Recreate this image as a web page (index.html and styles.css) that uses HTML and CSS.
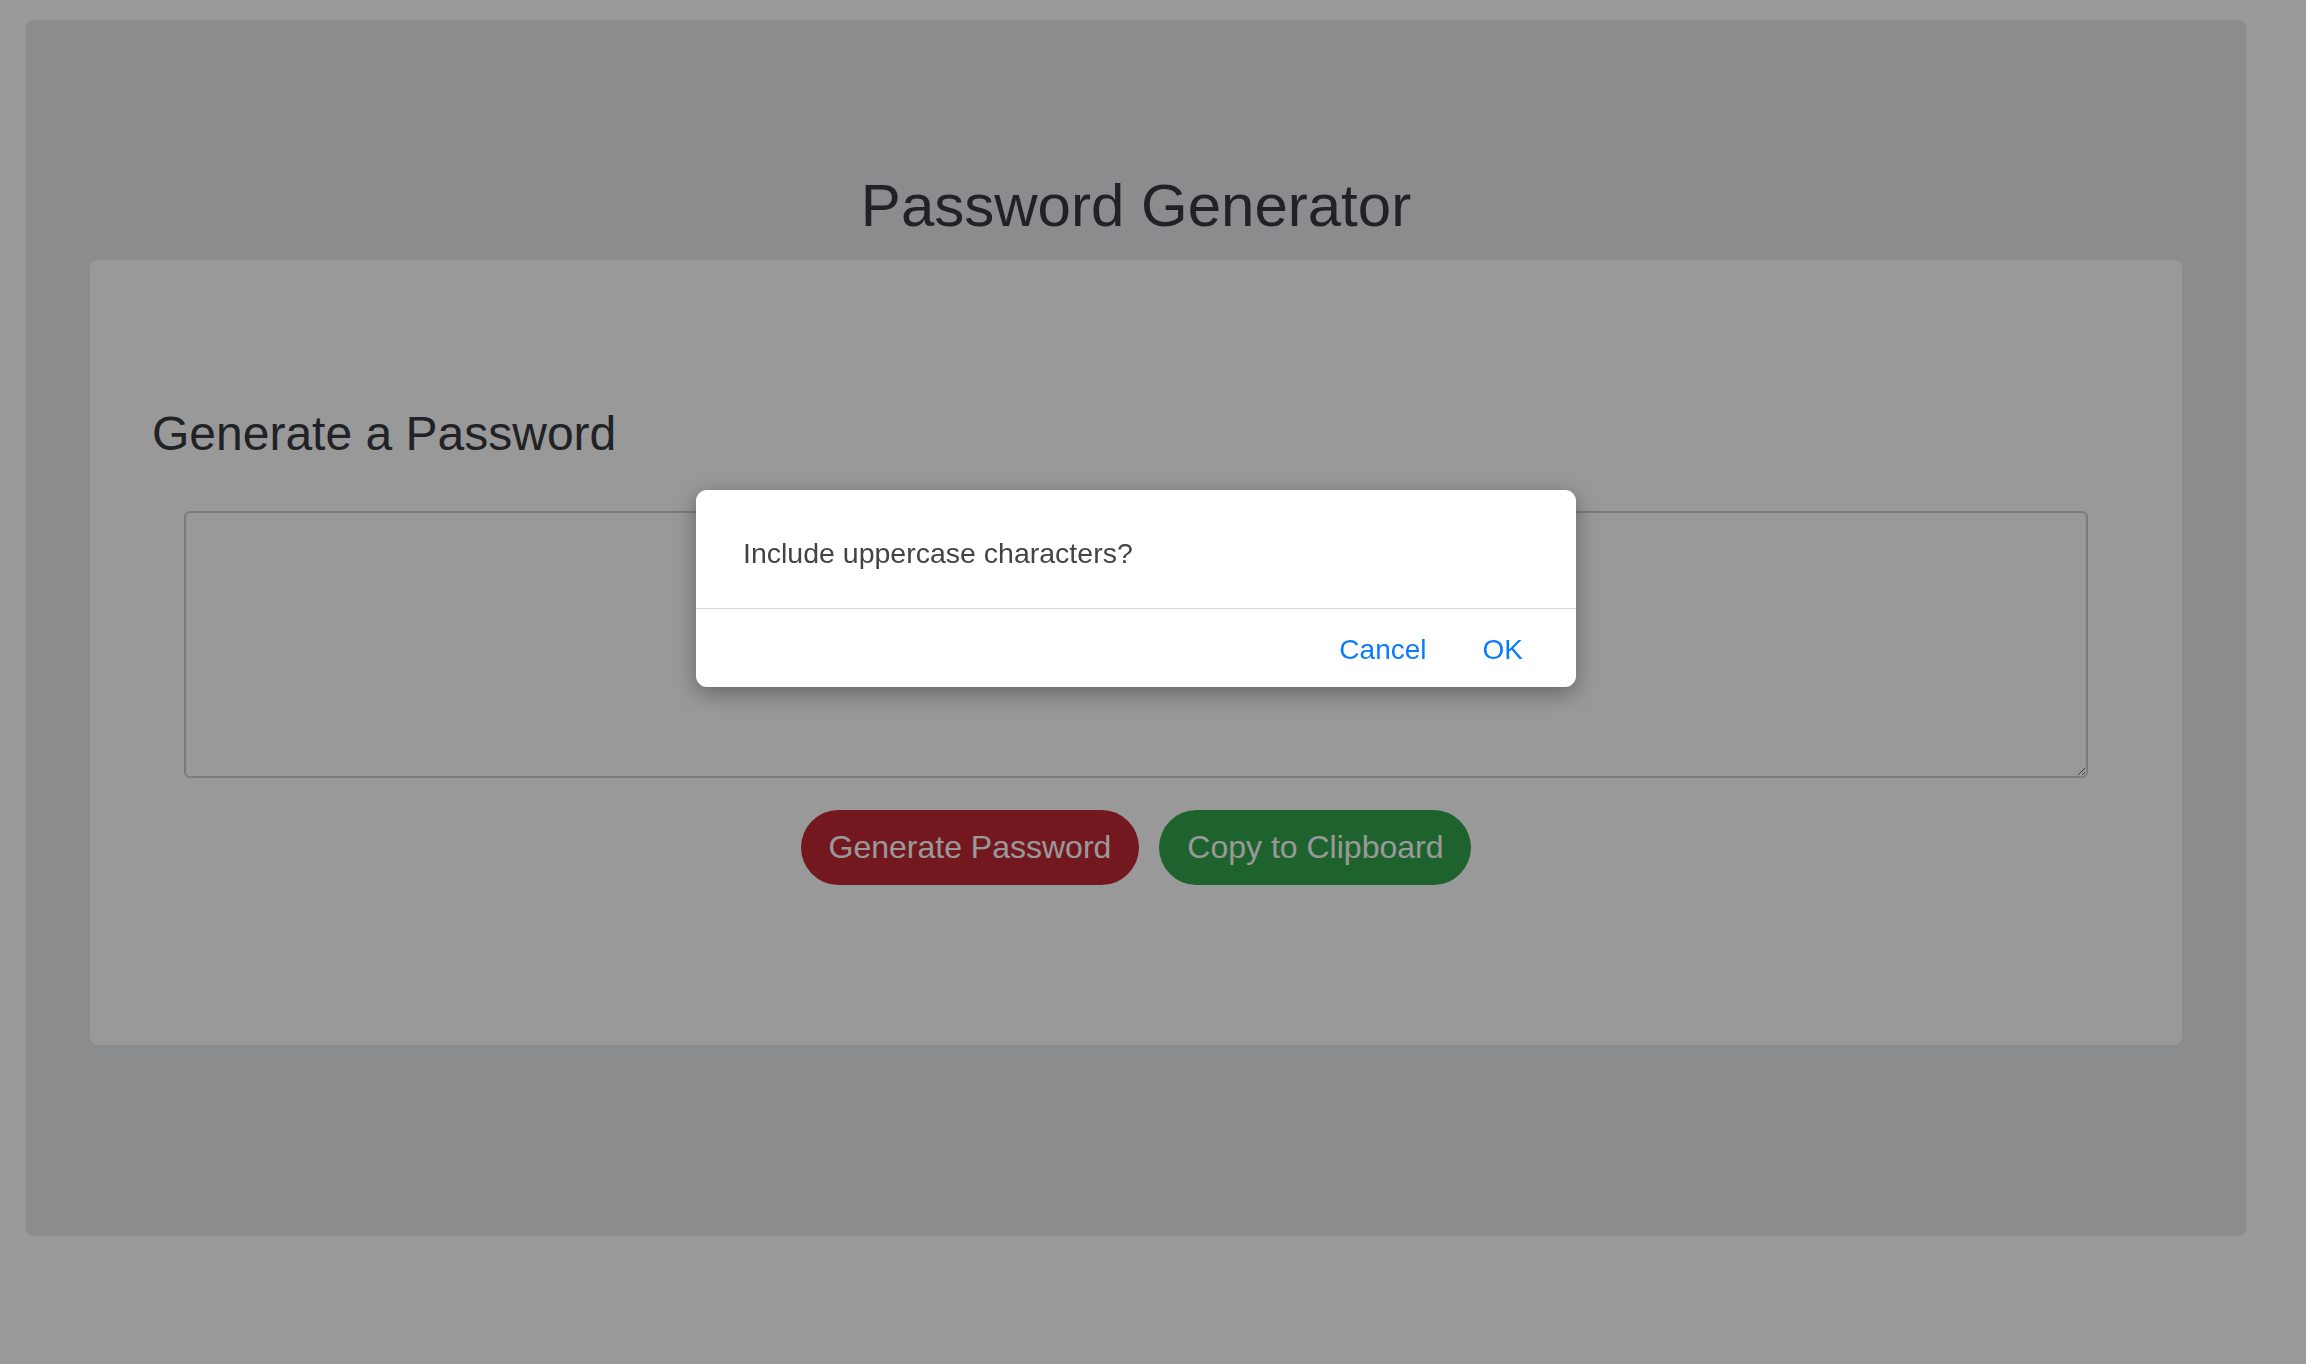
FILE: index.html
```html
<!DOCTYPE html>
<html lang="en">
<head>
    <meta charset="UTF-8">
    <title>Password Generator</title>
    <link rel="stylesheet" href="styles.css">
</head>
<body>
    <!--外层容器-->
    <div class="wrapper">
        <h1 class="title">Password Generator</h1>
        <div class="card">
            <h2 class="card-title">Generate a Password</h2>
            <textarea class="password" id="password" readonly></textarea>
            <div class="btns">
                <button class="btn btn-generate" id="generate">Generate Password</button>
                <button class="btn btn-copy" id="copy">Copy to Clipboard</button>
            </div>
        </div>
    </div>

    <!--confirm 弹窗-->
    <div class="backdrop"></div>
    <div class="dialog">
        <p class="dialog-msg">Include uppercase characters?</p>
        <div class="dialog-actions">
            <a href="javascript:;" class="dialog-btn">Cancel</a>
            <a href="javascript:;" class="dialog-btn">OK</a>
        </div>
    </div>
</body>
</html>
```

FILE: styles.css
```css
*{
    margin: 0;
    padding: 0;
    box-sizing: border-box;
}
body{
    background-color: #fff;
    font-family: "Liberation Sans", Arial, sans-serif;
    color: #363a40;
}
.wrapper{
    margin: 20px 60px 0 26px;
    padding: 150px 64px 191px;
    background-color: #e8e9ed;
    border-radius: 8px;
}
.title{
    font-size: 60px;
    font-weight: 400;
    line-height: 1.2;
    text-align: center;
    margin-bottom: 18px;
}
.card{
    background-color: #fff;
    border-radius: 8px;
    padding: 145px 62px 160px;
}
.card-title{
    font-size: 48px;
    font-weight: 400;
    line-height: 1.2;
    margin-bottom: 48px;
}
.password{
    display: block;
    width: calc(100% - 64px);
    height: 267px;
    margin: 0 32px;
    border: 2px solid #c9cfd6;
    border-radius: 6px;
    background: #fff;
    font-family: inherit;
    font-size: 23px;
    resize: both;
}
.btns{
    display: flex;
    justify-content: center;
    gap: 20px;
    margin-top: 32px;
}
.btn{
    height: 75px;
    padding: 0 28px;
    border: none;
    border-radius: 38px;
    color: #fff;
    font-family: inherit;
    font-size: 32px;
    cursor: pointer;
}
.btn-generate{
    background-color: #c02835;
}
.btn-copy{
    background-color: #32a54d;
}
/*遮罩*/
.backdrop{
    position: fixed;
    left: 0;
    top: 0;
    right: 0;
    bottom: 0;
    background-color: rgba(0, 0, 0, 0.4);
}
.dialog{
    position: absolute;
    left: 696px;
    top: 490px;
    width: 880px;
    background-color: #fff;
    border-radius: 11px;
    box-shadow: 0 6px 22px rgba(0, 0, 0, 0.35);
    overflow: hidden;
}
.dialog-msg{
    height: 119px;
    padding: 47px 47px 0;
    font-size: 28.5px;
    line-height: 32px;
    color: #444;
    border-bottom: 1.5px solid #d8d8d8;
}
.dialog-actions{
    display: flex;
    justify-content: flex-end;
    gap: 56px;
    height: 78px;
    padding: 25px 53px 0 0;
}
.dialog-btn{
    font-size: 28px;
    line-height: 32px;
    color: #0b7bfe;
    text-decoration: none;
}
```
